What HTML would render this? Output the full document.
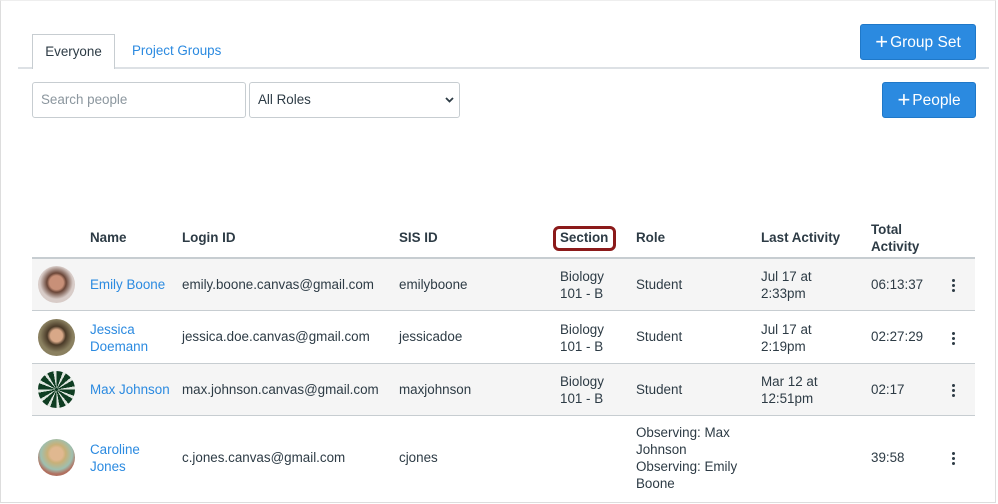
<!DOCTYPE html>
<html><head><meta charset="utf-8"><style>
*{box-sizing:border-box;margin:0;padding:0}
body{width:998px;height:504px;background:#fff;font-family:"Liberation Sans",sans-serif;font-size:13.4px;color:#2d3b45;position:relative;overflow:hidden}
.frame{position:absolute;left:0;top:0;width:996px;height:503px;border:1px solid #ddd;border-top:1px solid #eee}
.a{position:absolute}
.tabline{left:18px;top:67px;width:971px;height:2px;background:#dde1e5}
.tab{left:32px;top:34px;width:83px;height:35px;border:1px solid #c7cdd1;border-bottom:none;background:#fff;text-align:center;line-height:34px}
.btn{background:#2b8ae0;color:#fff;border:1px solid #1f78c8;border-radius:3px;font-size:15.5px;text-align:center}
.btn b{font-weight:200;font-size:22px;vertical-align:-2px;margin-right:2px}
.inp{border:1px solid #c7cdd1;border-radius:3px;height:36px;line-height:34px;padding-left:8px;font-size:13.4px}
.row{left:32px;width:943px;border-bottom:1px solid #c7cdd1}
.g{background:#f5f5f5}
.h{font-weight:bold}
.lnk{color:#2b8ae0}
.av{width:37px;height:37px;border-radius:50%}
.dots{width:3px;height:3px;background:#2d3b45;border-radius:50%;box-shadow:0 5px 0 #2d3b45,0 10px 0 #2d3b45}
.t{line-height:17px}
</style></head><body>
<div class="frame"></div>
<div class="a tabline"></div>
<div class="a tab">Everyone</div>
<div class="a lnk" style="left:132px;top:43px">Project Groups</div>
<div class="a btn" style="left:860px;top:24px;width:116px;height:36px;line-height:34px"><b>+</b>Group Set</div>
<div class="a inp" style="left:32px;top:82px;width:214px;color:#8b969e">Search people</div>
<div class="a inp" style="left:249px;top:82px;width:211px">All Roles<svg style="position:absolute;right:5px;top:14px" width="9" height="6" viewBox="0 0 9 6"><path d="M1 1l3.5 3.5L8 1" stroke="#2d3b45" stroke-width="1.8" fill="none"/></svg></div>
<div class="a btn" style="left:882px;top:82px;width:94px;height:36px;line-height:34px"><b>+</b>People</div>

<div class="a row" style="top:214px;height:45px;border-bottom:2px solid #c7cdd1"></div>
<div class="a h" style="left:90px;top:230px">Name</div>
<div class="a h" style="left:182px;top:230px">Login ID</div>
<div class="a h" style="left:399px;top:230px">SIS ID</div>
<div class="a" style="left:553px;top:226px;width:63px;height:25px;border:3px solid #8b1a1a;border-radius:6px"></div>
<div class="a h" style="left:560px;top:230px">Section</div>
<div class="a h" style="left:636px;top:230px">Role</div>
<div class="a h" style="left:761px;top:230px">Last Activity</div>
<div class="a h t" style="left:871px;top:221px">Total<br>Activity</div>

<div class="a row g" style="top:259px;height:52px"></div>
<div class="a av" style="left:38px;top:266px;background:radial-gradient(circle at 50% 45%,#c89078 0 25%,#6a4638 35%,#d8ccc8 60%)"></div>
<div class="a lnk" style="left:90px;top:277px">Emily Boone</div>
<div class="a" style="left:182px;top:277px">emily.boone.canvas@gmail.com</div>
<div class="a" style="left:399px;top:277px">emilyboone</div>
<div class="a t" style="left:560px;top:268px">Biology<br>101 - B</div>
<div class="a" style="left:636px;top:277px">Student</div>
<div class="a t" style="left:761px;top:268px">Jul 17 at<br>2:33pm</div>
<div class="a" style="left:871px;top:277px">06:13:37</div>
<div class="a dots" style="left:952px;top:279px"></div>

<div class="a row" style="top:311px;height:53px"></div>
<div class="a av" style="left:38px;top:319px;background:radial-gradient(circle at 50% 45%,#d8a888 0 22%,#4a3a28 34%,#8a8060 60%)"></div>
<div class="a lnk t" style="left:90px;top:321px">Jessica<br>Doemann</div>
<div class="a" style="left:182px;top:329px">jessica.doe.canvas@gmail.com</div>
<div class="a" style="left:399px;top:329px">jessicadoe</div>
<div class="a t" style="left:560px;top:321px">Biology<br>101 - B</div>
<div class="a" style="left:636px;top:329px">Student</div>
<div class="a t" style="left:761px;top:321px">Jul 17 at<br>2:19pm</div>
<div class="a" style="left:871px;top:329px">02:27:29</div>
<div class="a dots" style="left:952px;top:332px"></div>

<div class="a row g" style="top:364px;height:52px"></div>
<div class="a av" style="left:38px;top:371px;background:repeating-conic-gradient(#0f3d22 0 20deg,#dfe6df 20deg 30deg)"></div>
<div class="a lnk" style="left:90px;top:382px">Max Johnson</div>
<div class="a" style="left:182px;top:382px">max.johnson.canvas@gmail.com</div>
<div class="a" style="left:399px;top:382px">maxjohnson</div>
<div class="a t" style="left:560px;top:373px">Biology<br>101 - B</div>
<div class="a" style="left:636px;top:382px">Student</div>
<div class="a t" style="left:761px;top:373px">Mar 12 at<br>12:51pm</div>
<div class="a" style="left:871px;top:382px">02:17</div>
<div class="a dots" style="left:952px;top:384px"></div>

<div class="a av" style="left:38px;top:439px;background:radial-gradient(circle at 50% 40%,#e0b890 0 22%,#c8b078 32%,#9ec0b0 55%,#b07060 70%)"></div>
<div class="a lnk t" style="left:90px;top:441px">Caroline<br>Jones</div>
<div class="a" style="left:182px;top:450px">c.jones.canvas@gmail.com</div>
<div class="a" style="left:399px;top:450px">cjones</div>
<div class="a t" style="left:636px;top:424px">Observing: Max<br>Johnson<br>Observing: Emily<br>Boone</div>
<div class="a" style="left:871px;top:450px">39:58</div>
<div class="a dots" style="left:952px;top:452px"></div>
</body></html>
